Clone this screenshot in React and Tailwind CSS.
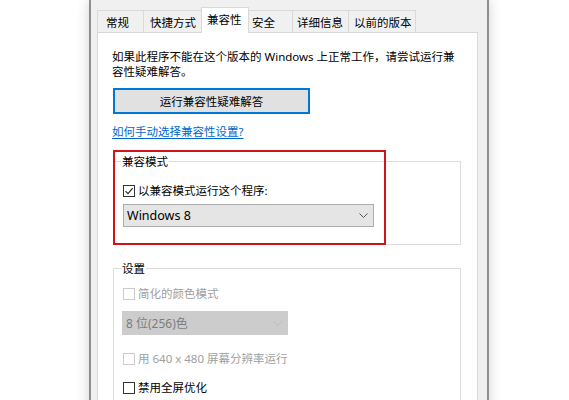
const tabs = [
  { label: "常规", w: "w-[47px]", pl: "pl-[8px]" },
  { label: "快捷方式", w: "w-[59px]", pl: "pl-[6px]" },
  { label: "兼容性", w: "w-[48px]", pl: "pl-[5px]", active: true },
  { label: "安全", w: "w-[45px]", pl: "pl-[3px]" },
  { label: "详细信息", w: "w-[57px]", pl: "pl-[4px]" },
  { label: "以前的版本", w: "w-[68px]", pl: "pl-[5px]" },
];

function Check({ checked, disabled }) {
  return (
    <span
      className={`flex h-[12px] w-[12px] shrink-0 items-center justify-center border bg-white ${
        disabled ? "border-[#cccccc]" : "border-[#333333]"
      }`}
    >
      {checked && (
        <svg width="10" height="10" viewBox="0 0 10 10">
          <path d="M1.5 5.2 L4 7.7 L8.7 2.2" fill="none" stroke="#222" strokeWidth="1.1" />
        </svg>
      )}
    </span>
  );
}

function Chevron({ color }) {
  return (
    <svg width="9" height="5" viewBox="0 0 9 5">
      <path d="M0.5 0.5 L4.5 4.5 L8.5 0.5" fill="none" stroke={color} strokeWidth="1" />
    </svg>
  );
}

export default function App() {
  return (
    <div className="h-[400px] w-[569px] overflow-hidden bg-white pl-[89px] font-['Noto_Sans','Noto_Sans_CJK_SC',sans-serif] text-[11.5px] leading-[15px] text-black">
      {/* window */}
      <div className="h-[420px] w-[400px] border-x-2 border-[#8f8f8f] bg-[#f0f0f0] pl-[6px] pr-[9px] shadow-[0_0_12px_rgba(0,0,0,0.18)]">
        {/* tabs */}
        <div className="flex items-end pt-[7px]">
          {tabs.map((t, i) => (
            <div
              key={t.label}
              className={`flex items-center border-x border-t border-[#d9d9d9] ${t.w} ${t.pl} ${
                i > 0 ? "-ml-px" : ""
              } ${t.active ? "relative z-10 -mb-px h-[26px] bg-white pb-[2px]" : "h-[22px] bg-[#f0f0f0] pt-[1px]"}`}
            >
              {t.label}
            </div>
          ))}
        </div>

        {/* panel */}
        <div className="h-[400px] border border-[#d9d9d9] bg-white pl-[14px] pt-[16px]">
          <p>
            如果此程序不能在这个版本的 Windows 上正常工作，请尝试运行兼
            <br />
            容性疑难解答。
          </p>

          <button className="ml-px mt-[9px] flex h-[26px] w-[197px] items-center justify-center border-2 border-[#0078d7] bg-[#e1e1e1]">
            运行兼容性疑难解答
          </button>

          <div className="mt-[10px] text-[#0066cc] underline underline-offset-2">如何手动选择兼容性设置?</div>

          {/* compatibility mode */}
          <div className="relative ml-px mt-[15px] w-[348px]">
            <fieldset className="border border-[#dcdcdc] pb-[17px] pl-[9px]">
              <legend className="-ml-[2px] px-[1px]">兼容模式</legend>
              <div className="mt-[14px] flex items-center gap-[3px]">
                <Check checked />
                <span>以兼容模式运行这个程序:</span>
              </div>
              <div className="mt-[6px] flex h-[23px] w-[251px] items-center justify-between border border-[#adadad] bg-[#e5e5e5] pl-[3px] pr-[5px] text-[12.5px]">
                <span>Windows 8</span>
                <Chevron color="#555" />
              </div>
            </fieldset>
            <div className="absolute left-0 top-[-4px] h-[95px] w-[273px] border-2 border-[#d1131b]" />
          </div>

          {/* settings */}
          <div className="ml-px mt-[16px] w-[348px]">
            <fieldset className="border border-[#dcdcdc] pb-[30px] pl-[9px]">
              <legend className="-ml-[2px] px-[1px]">设置</legend>
              <div className="mt-[10px] flex items-center gap-[3px] text-[#a0a0a0]">
                <Check disabled />
                <span>简化的颜色模式</span>
              </div>
              <div className="-ml-px mt-[10px] flex h-[24px] w-[166px] items-center justify-between border border-[#cccccc] bg-[#cccccc] pl-[3px] pr-[5px] text-[12px] text-[#7d7d7d]">
                <span>8 位(256)色</span>
                <Chevron color="#bdbdbd" />
              </div>
              <div className="mt-[16px] flex items-center gap-[3px] text-[#a0a0a0]">
                <Check disabled />
                <span>用 640 x 480 屏幕分辨率运行</span>
              </div>
              <div className="mt-[14px] flex items-center gap-[3px]">
                <Check />
                <span>禁用全屏优化</span>
              </div>
            </fieldset>
          </div>
        </div>
      </div>
    </div>
  );
}
